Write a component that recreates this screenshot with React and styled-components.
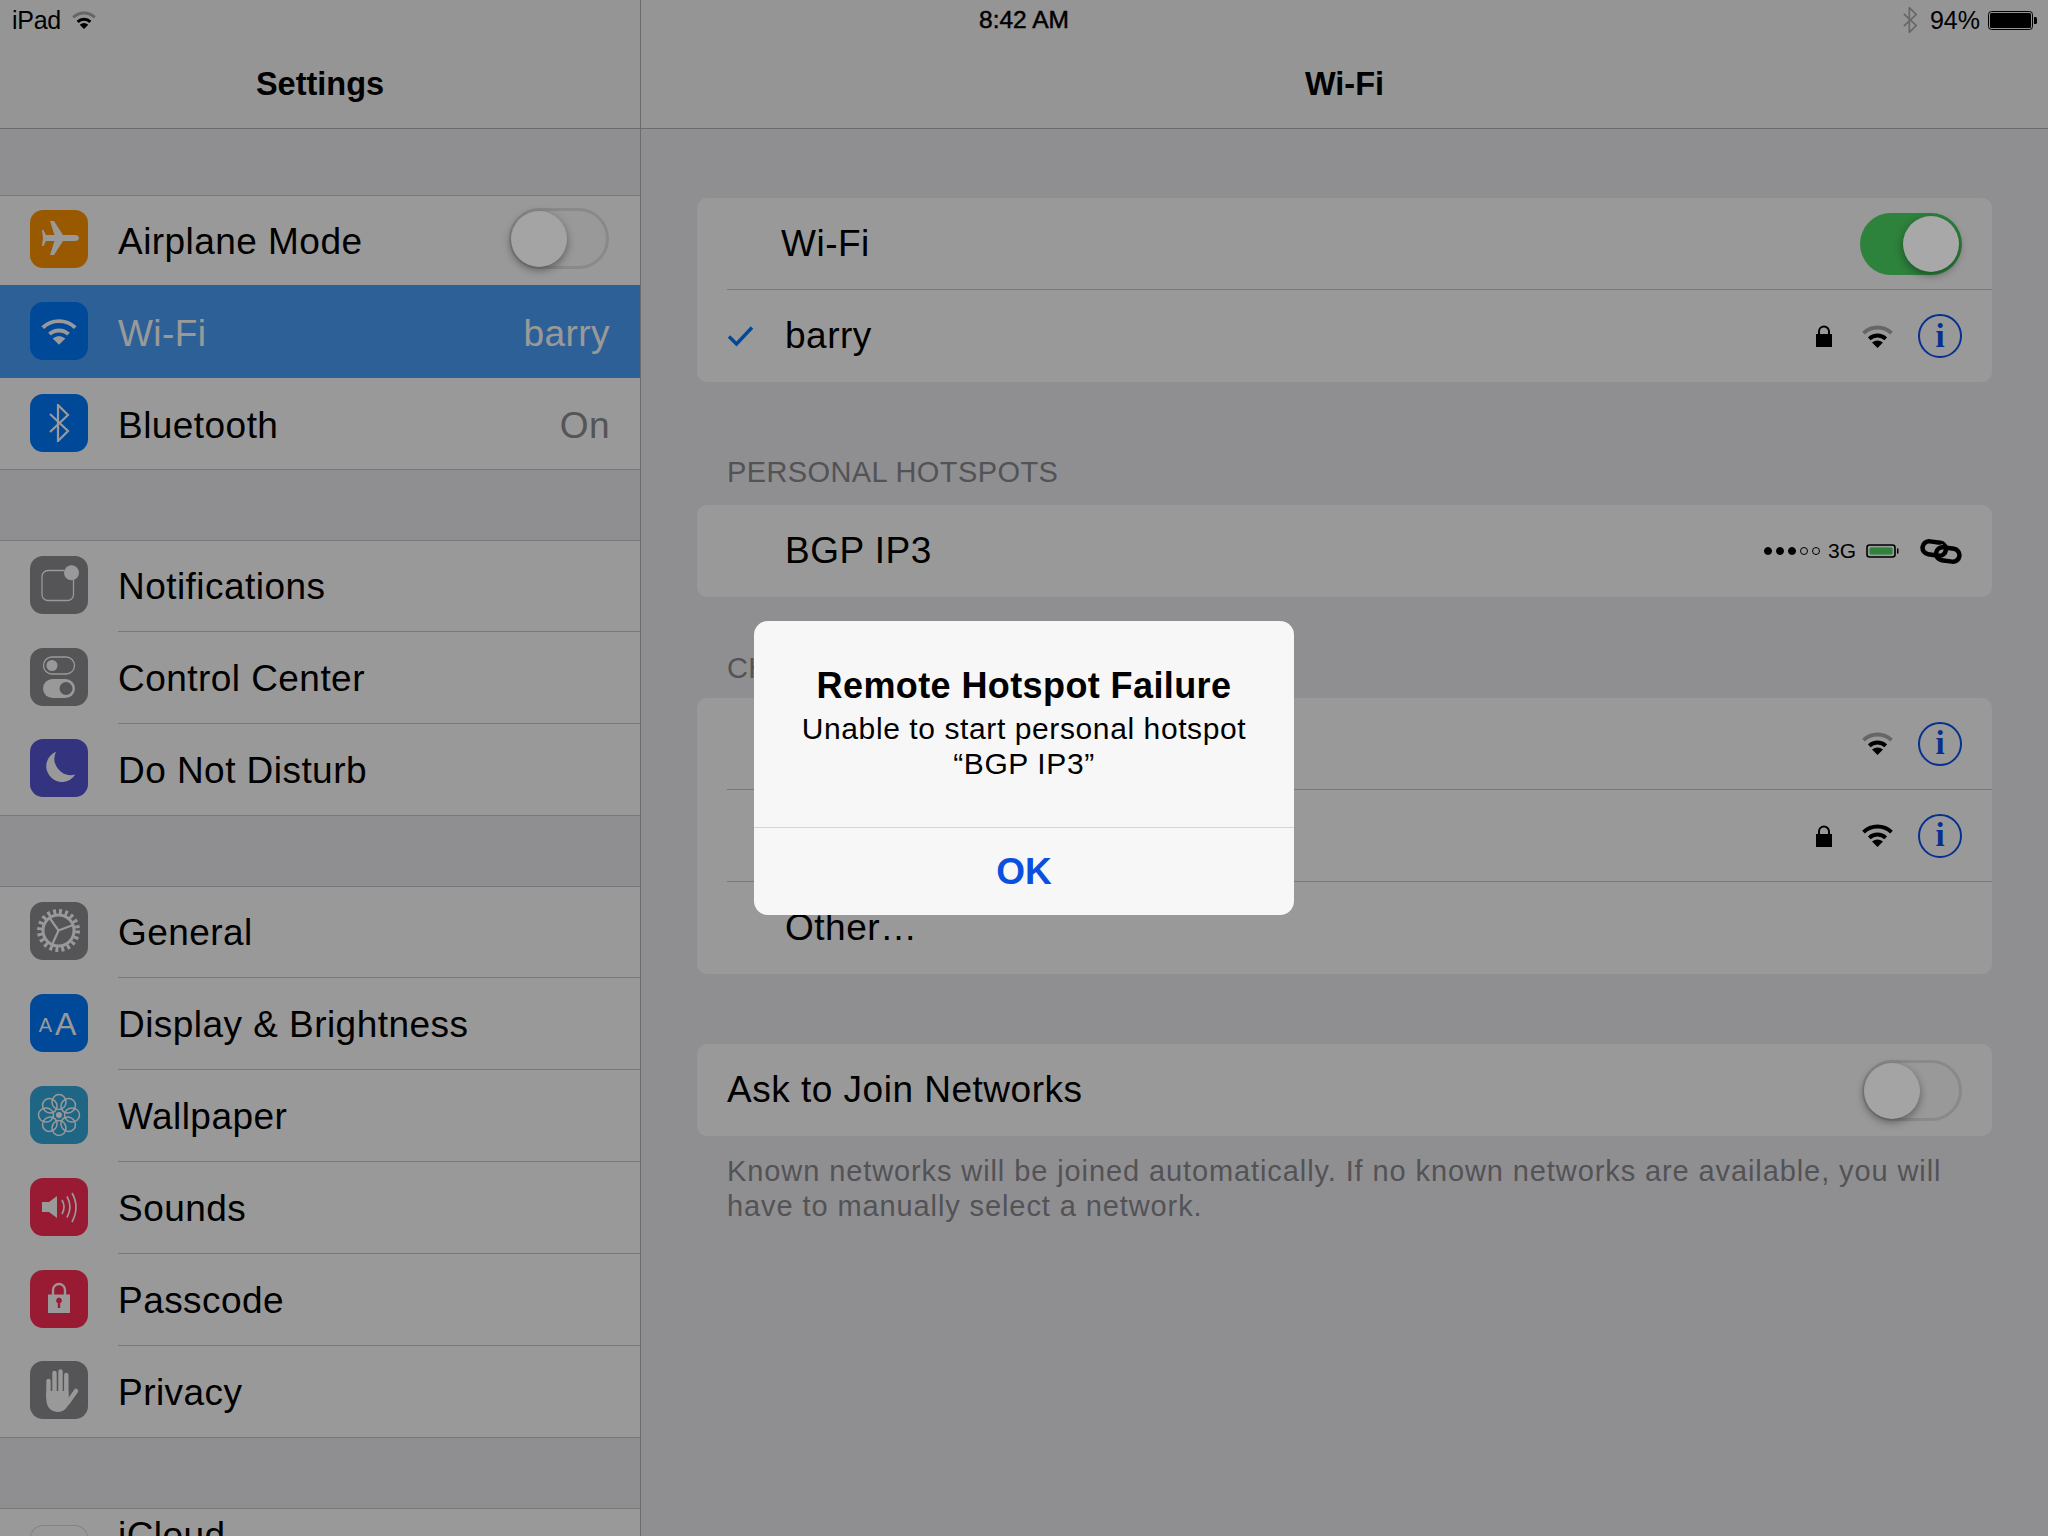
import React from 'react';
import styled, { createGlobalStyle } from 'styled-components';

const Global = createGlobalStyle`
  html, body { margin: 0; padding: 0; background: #efeff4; }
  * { box-sizing: border-box; }
`;

const Page = styled.div`
  position: relative;
  width: 2048px;
  height: 1536px;
  overflow: hidden;
  display: flex;
  background: #efeff4;
  color: #000;
  font-family: "Liberation Sans", Arial, sans-serif;
`;

const StatusBar = styled.div`
  position: absolute;
  top: 0;
  left: 0;
  right: 0;
  height: 40px;
  display: flex;
  align-items: center;
  justify-content: space-between;
  padding: 0 11px 0 12px;
  font-size: 25px;
`;
const StatusSide = styled.div`
  display: flex;
  align-items: center;
  gap: ${p => p.$gap}px;
`;
const Carrierlabel = styled.span`
  letter-spacing: -0.3px;
`;
const Percent = styled.span`
  margin-left: 4px;
`;
const Clock = styled.div`
  position: absolute;
  left: 0;
  right: 0;
  text-align: center;
  font-size: 24.5px;
  -webkit-text-stroke: 0.5px #000;
`;

const Sidebar = styled.aside`
  width: 641px;
  flex: none;
  border-right: 1px solid #b3b3b6;
  height: 100%;
`;
const NavBar = styled.header`
  height: 129px;
  padding-top: 41px;
  background: #f8f8f8;
  border-bottom: 1px solid #b2b2b2;
  display: flex;
  align-items: center;
  justify-content: center;
  font-size: 32.5px;
  font-weight: 700;
`;
const SideScroll = styled.div`
  padding-top: 66px;
  display: flex;
  flex-direction: column;
  gap: 70px;
`;
const SideSection = styled.section`
  background: #fff;
  border-top: 1px solid #c8c7cc;
  border-bottom: 1px solid #c8c7cc;
`;
const SideRow = styled.div`
  height: ${p => p.$h || 92}px;
  padding-left: 30px;
  padding-top: ${p => p.$nudge || 0}px;
  display: flex;
  align-items: center;
  gap: 30px;
  background: ${p => (p.$active ? '#4da0fd' : 'transparent')};
  color: ${p => (p.$active ? '#fff' : '#000')};
  &:first-child { height: ${p => p.$h || 91}px; }
  &:last-child { height: ${p => p.$h || 91}px; }
`;
const Tile = styled.div`
  width: 58px;
  height: 58px;
  flex: none;
  margin-bottom: 3px;
  border-radius: 13px;
  background: ${p => p.$bg};
  color: #fff;
  display: flex;
  align-items: center;
  justify-content: center;
  box-shadow: ${p => (p.$outline ? 'inset 0 0 0 1px #dcdcdc' : 'none')};
`;
const TileLetters = styled.div`
  font-size: 32px;
  line-height: 1;
  letter-spacing: 3px;
  margin-top: 2px;
  span {
    font-size: 20px;
    vertical-align: 3px;
  }
`;
const SideBody = styled.div`
  flex: 1;
  align-self: stretch;
  display: flex;
  align-items: center;
  justify-content: space-between;
  padding-right: 31px;
  padding-bottom: ${p => p.$pb || 0}px;
  border-bottom: ${p => (p.$sep ? '1px solid #c8c7cc' : 'none')};
`;
const Label = styled.span`
  font-size: 37px;
  letter-spacing: 0.45px;
  padding-top: 2px;
`;
const Value = styled.span`
  font-size: 37px;
  letter-spacing: 0.45px;
  padding-top: 2px;
  margin-right: -1px;
  color: ${p => (p.$light ? '#fff' : '#8e8e93')};
`;

const Track = styled.div`
  position: relative;
  flex: none;
  width: ${p => (p.$on ? 102 : 100)}px;
  height: ${p => (p.$on ? 62 : 61)}px;
  margin-bottom: ${p => p.$lift || 0}px;
  border-radius: 31px;
  background: ${p => (p.$on ? '#4cd964' : 'transparent')};
  border: ${p => (p.$on ? 'none' : '3px solid #e5e5ea')};
`;
const Knob = styled.div`
  position: absolute;
  z-index: 11;
  top: ${p => (p.$on ? 3 : 0)}px;
  ${p => (p.$on ? 'right: 3px;' : 'left: -1px;')}
  width: 56px;
  height: 56px;
  border-radius: 50%;
  background: ${p => (p.$on ? '#a8a8a8' : '#a4a4a4')};
  box-shadow: 0 3px 8px rgba(0, 0, 0, 0.4);
`;

const Detail = styled.main`
  flex: 1;
  height: 100%;
`;
const DetailScroll = styled.div`
  padding: 69px 56px 0;
  display: flex;
  flex-direction: column;
`;
const Card = styled.section`
  background: #fff;
  border-radius: 10px;
`;
const GroupLabel = styled.div`
  padding: ${p => p.$top}px 30px ${p => p.$bottom}px;
  font-size: 29px;
  line-height: 34px;
  color: #8a8a8f;
  letter-spacing: 0.4px;
`;
const GroupGap = styled.div`
  height: 70px;
`;
const CardRow = styled.div`
  height: 92px;
  margin-left: 30px;
  padding-right: 30px;
  padding-left: ${p => p.$indent || 0}px;
  display: flex;
  align-items: center;
  border-bottom: 1px solid #c8c7cc;
  &:last-child { border-bottom: none; }
`;
const RowName = styled.span`
  flex: 1;
  font-size: 37px;
  letter-spacing: 0.5px;
`;
const Check = styled.svg`
  flex: none;
  width: 27px;
  height: 22px;
  margin-right: 31px;
`;
const Accessories = styled.div`
  display: flex;
  align-items: center;
  gap: ${p => p.$gap || 25}px;
`;
const InfoButton = styled.div`
  width: 44px;
  height: 44px;
  border-radius: 50%;
  border: 2px solid #0a50f0;
  color: #0a50f0;
  display: flex;
  align-items: center;
  justify-content: center;
  font-family: "Liberation Serif", serif;
  font-weight: 700;
  font-size: 33px;
  line-height: 1;
`;
const Dots = styled.div`
  display: flex;
  gap: 4px;
  margin-right: 8px;
`;
const Dot = styled.i`
  width: 8px;
  height: 8px;
  border-radius: 50%;
  background: ${p => (p.$on ? '#000' : 'transparent')};
  border: 1.5px solid #000;
`;
const Carrier = styled.span`
  font-size: 21px;
  margin-right: 10px;
`;
const Hint = styled.p`
  margin: 18px 30px 0;
  font-size: 29px;
  line-height: 35px;
  letter-spacing: 0.9px;
  color: #8a8a8f;
`;

const Overlay = styled.div`
  position: absolute;
  inset: 0;
  z-index: 10;
  background: rgba(0, 0, 0, 0.4);
  display: flex;
  align-items: center;
  justify-content: center;
`;
const Alert = styled.div`
  width: 540px;
  height: 294px;
  border-radius: 14px;
  background: #f7f7f7;
  display: flex;
  flex-direction: column;
  text-align: center;
`;
const AlertBody = styled.div`
  height: 206px;
  padding-top: 44px;
`;
const AlertTitle = styled.div`
  font-size: 36px;
  line-height: 42px;
  font-weight: 700;
  letter-spacing: 0.4px;
`;
const AlertText = styled.div`
  font-size: 30px;
  line-height: 35px;
  letter-spacing: 0.6px;
  margin-top: 4px;
`;
const AlertButton = styled.div`
  flex: 1;
  border-top: 1px solid #d5d5d8;
  display: flex;
  align-items: center;
  justify-content: center;
  font-size: 37px;
  font-weight: 700;
  color: #0a4fe0;
`;

const WifiIcon = ({ w = 31, h = 23, fade, stroke = 3.9, color = '#000' }) => (
  <svg width={w} height={h} viewBox="0 0 31 23" fill="none" style={{ flex: 'none' }}>
    <path d="M1.5 8.2A20.2 20.2 0 0 1 29.5 8.2" stroke={fade ? '#aaaaaa' : color} strokeWidth={stroke} />
    <path d="M7.3 13.8A12 12 0 0 1 23.7 13.8" stroke={color} strokeWidth={stroke} />
    <path d="M15.5 23L10 17.6Q15.5 13.2 21 17.6Z" fill={color} />
  </svg>
);

const LockIcon = () => (
  <svg width="16" height="22" viewBox="0 0 16 22" style={{ flex: 'none', marginRight: 5 }}>
    <path d="M3 10V6.5a5 5 0 0 1 10 0V10" fill="none" stroke="#000" strokeWidth="2" />
    <rect x="0" y="9" width="16" height="13" fill="#000" />
  </svg>
);

const BtGlyph = ({ w, h, color = '#fff', sw = 2.2 }) => (
  <svg width={w} height={h} viewBox="0 0 22 38" fill="none" style={{ flex: 'none' }}>
    <path d="M2 10L20 27L10 37V1L20 11L2 28" stroke={color} strokeWidth={sw} />
  </svg>
);

const Plane = () => (
  <svg width="58" height="58" viewBox="0 0 58 58">
    <path d="M49 28c0-2-2-3-4-3H33L24 11h-4l4.500 14H16l-2.500-5H12l1 8-1 8h1.500L16 31h8.500L20 45h4l9-14h12c2 0 4-1 4-3z" fill="#fff" />
  </svg>
);

const Notify = () => (
  <svg width="58" height="58" viewBox="0 0 58 58" fill="none">
    <path d="M34 14.500H18a6 6 0 0 0-6 6v18a6 6 0 0 0 6 6h19.500a6 6 0 0 0 6-6V24" stroke="#fff" strokeWidth="1.300" />
    <circle cx="41.500" cy="16.700" r="7.500" fill="#fff" />
  </svg>
);

const Control = () => (
  <svg width="58" height="58" viewBox="0 0 58 58" fill="none">
    <rect x="13.500" y="9" width="31" height="17" rx="8.500" stroke="#fff" strokeWidth="1.300" />
    <circle cx="22" cy="17.500" r="5.500" fill="#fff" />
    <rect x="13" y="31" width="32" height="19" rx="9.500" fill="#fff" />
    <circle cx="36" cy="40.500" r="6.500" fill="#8e8e93" />
  </svg>
);

const Moon = () => (
  <svg width="58" height="58" viewBox="0 0 58 58">
    <path d="M26 12.700A15.700 15.700 0 1 0 45.300 35.500A16.500 16.500 0 0 1 26 12.700Z" fill="#fff" />
  </svg>
);

const Gear = () => (
  <svg width="58" height="58" viewBox="0 0 58 58" fill="none" stroke="#fff">
    <circle cx="28.500" cy="28.500" r="19" strokeWidth="5" strokeDasharray="2.900 3.070" />
    <circle cx="28.500" cy="28.500" r="15.500" strokeWidth="3" />
    <path d="M28.500 28.500L43 23M28.500 28.500L20 16.500M28.500 28.500L22 43" strokeWidth="2.200" />
  </svg>
);

const Flower = () => (
  <svg width="58" height="58" viewBox="0 0 58 58" fill="none" stroke="#fff" strokeWidth="1.500">
    {[0, 45, 90, 135, 180, 225, 270, 315].map(a => (
      <ellipse key={a} cx="29" cy="16" rx="7" ry="7.500" transform={`rotate(${a} 29 29)`} />
    ))}
    <circle cx="29" cy="29" r="3" fill="#fff" stroke="none" />
  </svg>
);

const Speaker = () => (
  <svg width="58" height="58" viewBox="0 0 58 58" fill="none">
    <path d="M12 24H19L27 18V40L19 34H12Z" fill="#fff" />
    <path d="M32 22Q36 29 32 36M37 18.500Q43 29 37 39.500M42 15Q50 29 42 44" stroke="#fff" strokeWidth="1.700" />
  </svg>
);

const TilePadlock = () => (
  <svg width="58" height="58" viewBox="0 0 58 58" fill="none">
    <path d="M23 25V20a6 6 0 0 1 12 0v5" stroke="#fff" strokeWidth="2.400" />
    <path fillRule="evenodd" d="M18 24.500H40V43H18ZM29 27.500a3 3 0 0 0-1.200 5.700V38h2.400V33.200A3 3 0 0 0 29 27.500Z" fill="#fff" />
  </svg>
);

const Hand = () => (
  <svg width="58" height="58" viewBox="0 0 58 58" fill="none">
    <path d="M18.500 20V36M24.500 12V34M30.500 10.500V34M36.300 14V36" stroke="#fff" strokeWidth="4.400" strokeLinecap="round" />
    <path d="M16.300 30V38C16.300 46 21 51 28 51C34 51 36.500 47 38.500 43.500L38.500 30Z" fill="#fff" />
    <path d="M37.500 42L46 30" stroke="#fff" strokeWidth="4.500" strokeLinecap="round" />
  </svg>
);

const LinkGlyph = () => (
  <svg width="42" height="25" viewBox="0 0 42 25" fill="none" stroke="#000" strokeWidth="4.500" style={{ flex: 'none', marginLeft: 21 }}>
    <rect x="2.500" y="3" width="23.500" height="13" rx="6.500" transform="rotate(8 14 9.500)" />
    <path d="M17 13C18 10 20 9 23 9" stroke="#fff" strokeWidth="7.500" />
    <rect x="16" y="9" width="23.500" height="13" rx="6.500" transform="rotate(8 28 15.500)" />
  </svg>
);

const MiniBattery = () => (
  <svg width="33" height="14" viewBox="0 0 33 14" style={{ flex: 'none' }}>
    <rect x="1" y="1" width="28" height="12" rx="2.500" fill="none" stroke="#000" strokeWidth="1.600" />
    <rect x="3.500" y="3.500" width="23" height="7" rx="1.500" fill="#4cd964" />
    <rect x="31" y="4.500" width="1.500" height="5" fill="#000" />
  </svg>
);

const StatusBattery = () => (
  <svg width="49" height="19" viewBox="0 0 49 19" style={{ flex: 'none' }}>
    <rect x="0.500" y="0.500" width="44" height="18" rx="3" fill="none" stroke="#000" strokeWidth="1" />
    <rect x="2" y="2" width="41" height="15" rx="1.500" fill="#000" />
    <path d="M46 6h1.500a1.500 1.500 0 0 1 1.500 1.500v4a1.500 1.500 0 0 1-1.500 1.500H46z" fill="#000" />
  </svg>
);

const Info = () => <InfoButton>i</InfoButton>;

const Toggle = ({ on, lift }) => (
  <Track $on={on} $lift={lift}>
    <Knob $on={on} />
  </Track>
);

export default function App() {
  return (
    <Page>
      <Global />
      <Sidebar>
        <NavBar>Settings</NavBar>
        <SideScroll>
          <SideSection>
            <SideRow $h={89}>
              <Tile $bg="#ff9500"><Plane /></Tile>
              <SideBody><Label>Airplane Mode</Label><Toggle lift={4} /></SideBody>
            </SideRow>
            <SideRow $h={93} $nudge={2} $active>
              <Tile $bg="#007aff"><WifiIcon w={36} h={27} color="#fff" stroke={3.4} /></Tile>
              <SideBody><Label>Wi-Fi</Label><Value $light>barry</Value></SideBody>
            </SideRow>
            <SideRow $h={91} $nudge={2}>
              <Tile $bg="#007aff"><BtGlyph w={22} h={38} /></Tile>
              <SideBody><Label>Bluetooth</Label><Value>On</Value></SideBody>
            </SideRow>
          </SideSection>
          <SideSection>
            <SideRow>
              <Tile $bg="#8e8e93"><Notify /></Tile>
              <SideBody $sep><Label>Notifications</Label></SideBody>
            </SideRow>
            <SideRow>
              <Tile $bg="#8e8e93"><Control /></Tile>
              <SideBody $sep><Label>Control Center</Label></SideBody>
            </SideRow>
            <SideRow>
              <Tile $bg="#5856d6"><Moon /></Tile>
              <SideBody><Label>Do Not Disturb</Label></SideBody>
            </SideRow>
          </SideSection>
          <SideSection>
            <SideRow>
              <Tile $bg="#8e8e93"><Gear /></Tile>
              <SideBody $sep><Label>General</Label></SideBody>
            </SideRow>
            <SideRow>
              <Tile $bg="#007aff"><TileLetters><span>A</span>A</TileLetters></Tile>
              <SideBody $sep><Label>Display &amp; Brightness</Label></SideBody>
            </SideRow>
            <SideRow>
              <Tile $bg="#34aadc"><Flower /></Tile>
              <SideBody $sep><Label>Wallpaper</Label></SideBody>
            </SideRow>
            <SideRow>
              <Tile $bg="#ff2d55"><Speaker /></Tile>
              <SideBody $sep><Label>Sounds</Label></SideBody>
            </SideRow>
            <SideRow>
              <Tile $bg="#ff2d55"><TilePadlock /></Tile>
              <SideBody $sep><Label>Passcode</Label></SideBody>
            </SideRow>
            <SideRow>
              <Tile $bg="#8e8e93"><Hand /></Tile>
              <SideBody><Label>Privacy</Label></SideBody>
            </SideRow>
          </SideSection>
          <SideSection>
            <SideRow $h={92}>
              <Tile $bg="#fff" $outline />
              <SideBody $pb={41}><Label>iCloud</Label></SideBody>
            </SideRow>
          </SideSection>
        </SideScroll>
      </Sidebar>

      <Detail>
        <NavBar>Wi-Fi</NavBar>
        <DetailScroll>
          <Card>
            <CardRow $indent={54}>
              <RowName>Wi-Fi</RowName>
              <Toggle on />
            </CardRow>
            <CardRow>
              <Check viewBox="0 0 27 22" fill="none">
                <path d="M2 11.500L9.500 19L25 2.500" stroke="#007aff" strokeWidth="3.400" />
              </Check>
              <RowName>barry</RowName>
              <Accessories>
                <LockIcon />
                <WifiIcon fade />
                <Info />
              </Accessories>
            </CardRow>
          </Card>
          <GroupLabel $top={73} $bottom={16}>PERSONAL HOTSPOTS</GroupLabel>
          <Card>
            <CardRow $indent={58}>
              <RowName>BGP IP3</RowName>
              <Dots>
                <Dot $on /><Dot $on /><Dot $on /><Dot /><Dot />
              </Dots>
              <Carrier>3G</Carrier>
              <MiniBattery />
              <LinkGlyph />
            </CardRow>
          </Card>
          <GroupLabel $top={54} $bottom={13}>CHOOSE A NETWORK...</GroupLabel>
          <Card>
            <CardRow $indent={58}>
              <RowName />
              <Accessories>
                <WifiIcon fade />
                <Info />
              </Accessories>
            </CardRow>
            <CardRow $indent={58}>
              <RowName />
              <Accessories>
                <LockIcon />
                <WifiIcon />
                <Info />
              </Accessories>
            </CardRow>
            <CardRow $indent={58}>
              <RowName>Other…</RowName>
            </CardRow>
          </Card>
          <GroupGap />
          <Card>
            <CardRow>
              <RowName>Ask to Join Networks</RowName>
              <Toggle />
            </CardRow>
          </Card>
          <Hint>
            Known networks will be joined automatically. If no known networks are available, you will have to manually select a network.
          </Hint>
        </DetailScroll>
      </Detail>

      <StatusBar>
        <StatusSide $gap={11}>
          <Carrierlabel>iPad</Carrierlabel>
          <WifiIcon w={24} h={18} fade />
        </StatusSide>
        <Clock>8:42 AM</Clock>
        <StatusSide $gap={8}>
          <BtGlyph w={16} h={26} color="#aaaaaa" sw={2.4} />
          <Percent>94%</Percent>
          <StatusBattery />
        </StatusSide>
      </StatusBar>

      <Overlay>
        <Alert>
          <AlertBody>
            <AlertTitle>Remote Hotspot Failure</AlertTitle>
            <AlertText>Unable to start personal hotspot<br />“BGP IP3”</AlertText>
          </AlertBody>
          <AlertButton>OK</AlertButton>
        </Alert>
      </Overlay>
    </Page>
  );
}
